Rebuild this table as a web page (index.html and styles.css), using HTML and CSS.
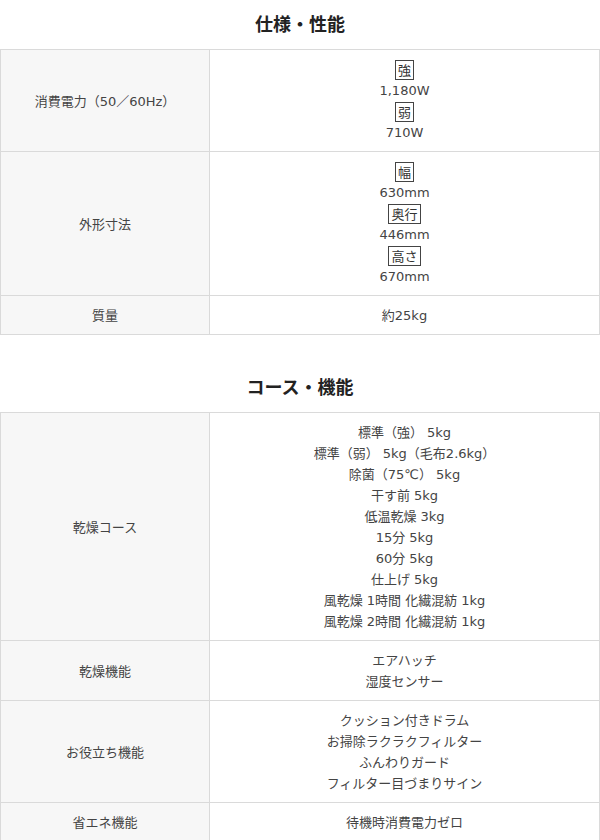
FILE: index.html
```html
<!DOCTYPE html>
<html lang="ja">
<head>
<meta charset="utf-8">
<link rel="stylesheet" href="styles.css">
</head>
<body>
<h2 class="heading">仕様・性能</h2>
<table class="spec">
  <tr>
    <th>消費電力（50／60Hz）</th>
    <td><span class="tag">強</span><br>1,180W<br><span class="tag">弱</span><br>710W</td>
  </tr>
  <tr>
    <th>外形寸法</th>
    <td><span class="tag">幅</span><br>630mm<br><span class="tag">奥行</span><br>446mm<br><span class="tag">高さ</span><br>670mm</td>
  </tr>
  <tr>
    <th>質量</th>
    <td>約25kg</td>
  </tr>
</table>
<h2 class="heading heading-2">コース・機能</h2>
<table class="spec">
  <tr>
    <th>乾燥コース</th>
    <td>標準（強） 5kg<br>標準（弱） 5kg（毛布2.6kg）<br>除菌（75℃） 5kg<br>干す前 5kg<br>低温乾燥 3kg<br>15分 5kg<br>60分 5kg<br>仕上げ 5kg<br>風乾燥 1時間 化繊混紡 1kg<br>風乾燥 2時間 化繊混紡 1kg</td>
  </tr>
  <tr>
    <th>乾燥機能</th>
    <td>エアハッチ<br>湿度センサー</td>
  </tr>
  <tr>
    <th>お役立ち機能</th>
    <td>クッション付きドラム<br>お掃除ラクラクフィルター<br>ふんわりガード<br>フィルター目づまりサイン</td>
  </tr>
  <tr>
    <th>省エネ機能</th>
    <td>待機時消費電力ゼロ</td>
  </tr>
</table>
</body>
</html>
```
FILE: styles.css
```css
html, body {
  margin: 0;
  padding: 0;
  background: #fff;
}
body {
  font-family: "DejaVu Sans", "Noto Sans CJK JP", sans-serif;
  color: #444;
  font-size: 13px;
}
.heading {
  margin: 0;
  padding: 10px 0 13px;
  line-height: 26px;
  font-family: "Noto Sans CJK JP", sans-serif;
  font-size: 18px;
  font-weight: bold;
  color: #222;
  text-align: center;
}
.heading-2 {
  margin-top: 28px;
}
.spec {
  width: 600px;
  border-collapse: collapse;
  table-layout: fixed;
}
.spec th,
.spec td {
  border: 1px solid #dadada;
  padding: 9px 8px 8px;
  line-height: 21px;
  text-align: center;
  vertical-align: middle;
  font-weight: normal;
}
.spec th {
  width: 192px;
  background: #f7f7f7;
  color: #444;
}
.spec td {
  background: #fff;
}
.tag {
  display: inline-block;
  vertical-align: top;
  margin-top: 1px;
  border: 1px solid #444;
  padding: 0 2px;
  line-height: 18px;
  font-family: "Noto Sans CJK JP", sans-serif;
  color: #333;
}
```
